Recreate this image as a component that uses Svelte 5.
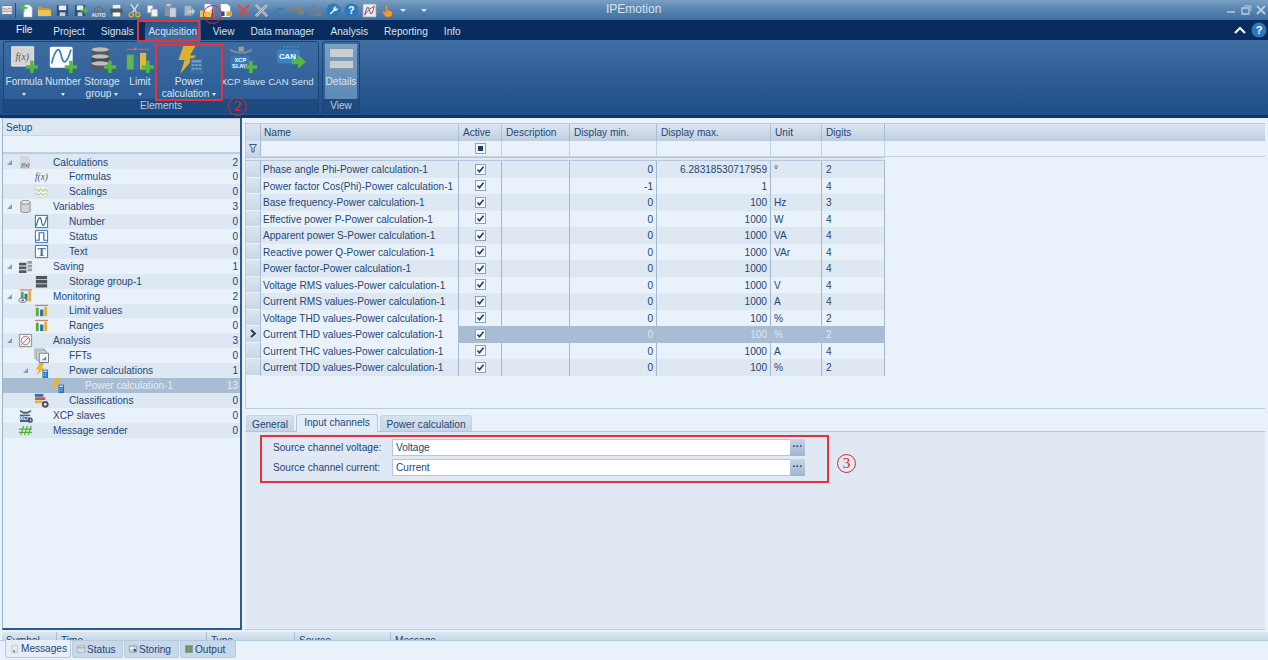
<script>
  const plus = '<path d="M24 18h4v5h5v4h-5v5h-4v-5h-5v-4h5z" fill="#55b93f"/>';
  const dbDisc = (y, c) => `<path d="M5 ${y}c0-3 20-3 20 0v5c0 3-20 3-20 0z" fill="${c}"/><ellipse cx="15" cy="${y}" rx="10" ry="2.4" fill="#b9bcc0"/>`;

  const small = {
    new: '<path d="M5 2h6l3 3v10H5z" fill="#fff" stroke="#9fb2c6" stroke-width=".6"/><path d="M1 4h3V1h2v3h3v2H6v3H4V6H1z" fill="#58b84a"/>',
    open: '<path d="M1 4h5l1 1.5h7V9H1z" fill="#c99c36"/><path d="M1 14V7.5h14V14z" fill="#eec353"/>',
    save: '<path d="M2 2h12v12H2z" fill="#2f4f78"/><path d="M4 2.6h8v5H4z" fill="#e9eff6"/><path d="M5 10h6v4H5z" fill="#c6d1de"/>',
    saveas: '<path d="M2 2h11v12H2z" fill="#2f4f78"/><path d="M4 2.6h7v5H4z" fill="#e9eff6"/><path d="M5 10h5v4H5z" fill="#c6d1de"/><path d="M8 7h4V4l4 4-4 4V9H8z" fill="#58b84a"/>',
    auto: '<path d="M3 9a5 5 0 0 1 10 0z" fill="#7c7f82" stroke="#5f6266" stroke-dasharray="2 1"/><text x="8" y="15" font-size="5.4" font-weight="700" text-anchor="middle" fill="#e6ecf2" font-family="Liberation Sans">AUTO</text>',
    print: '<path d="M4 2h8v4H4z" fill="#eef1f4"/><path d="M1.500 6h13v6h-13z" fill="#55585c"/><path d="M4 10h8v4.500H4z" fill="#fff" stroke="#888" stroke-width=".5"/>',
    cut: '<path d="M4 1l6 9M12 1L6 10" stroke="#d5d9de" stroke-width="1.600" fill="none"/><circle cx="4.500" cy="12.500" r="2.200" fill="none" stroke="#d8ae30" stroke-width="1.500"/><circle cx="11.500" cy="12.500" r="2.200" fill="none" stroke="#d8ae30" stroke-width="1.500"/>',
    copy: '<path d="M2 2h7v9H2z" fill="#8f9aa6"/><path d="M3 3h5v7H3z" fill="#fff"/><path d="M6 6h8v9H6z" fill="#8f9aa6"/><path d="M7 7h6v7H7z" fill="#eef1f4"/>',
    paste: '<path d="M2 2h8v12H2z" fill="#8b929b"/><path d="M7 5h7v10H7z" fill="#c9d2dc" stroke="#7f8993" stroke-width=".6"/><path d="M4 1h4v2H4z" fill="#cfd4d9"/>',
    move: '<path d="M3 2h9v12H3z" fill="#7f8c9a"/><path d="M4 3h7v10H4z" fill="#a7b4c2"/><path d="M7 8h5V5l3 4-3 4v-3H7z" fill="#c3ced9"/>',
    folderdoc: '<path d="M6 1h6l2 2v8H6z" fill="#fff"/><path d="M1 8h5l1 1h6v6H1z" fill="#eec353"/>',
    docstar: '<path d="M3 1h7l3 3v11H3z" fill="#fff"/><path d="M9 9h6v5H9z" fill="#d9a93a"/><path d="M3 9h4v5H3z" fill="#2f4f78"/>',
    cross: '<path d="M2 2l12 12M14 2L2 14" stroke="#d64a47" stroke-width="2.200"/>',
    crossgrey: '<path d="M2 2l12 12M14 2L2 14" stroke="#c0c8d0" stroke-width="3"/><path d="M2 2l12 12M14 2L2 14" stroke="#7f8a96" stroke-width=".8"/>',
    undo: '<path d="M3 9a6 6 0 0 1 11-1l-2.500 1A3.500 3.500 0 0 0 6 9.500L8 12H1V5z" fill="#3f7db4"/>',
    redo: '<path d="M13 9A6 6 0 0 0 2 8l2.500 1A3.500 3.500 0 0 1 10 9.500L8 12h7V5z" fill="#8b8063"/>',
    gears: '<circle cx="7" cy="8" r="4.500" fill="none" stroke="#777f87" stroke-width="3" stroke-dasharray="2 1"/><circle cx="12" cy="12" r="2.500" fill="#777f87"/>',
    wrench: '<circle cx="8" cy="8" r="7.500" fill="#2b78bb"/><path d="M11.500 3.500a3 3 0 0 0-3.600 3.800L4 11.200 5 12.300l3.900-3.900a3 3 0 0 0 3.800-3.600L11 6.500 9.600 5.200z" fill="#eaf2f9"/>',
    help: '<circle cx="8" cy="8" r="7.500" fill="#2b78bb"/><text x="8" y="12" font-size="11" font-weight="700" text-anchor="middle" fill="#fff" font-family="Liberation Sans">?</text>',
    graph: '<path d="M1 1h14v14H1z" fill="#e8edf2" stroke="#8b98a6" stroke-width=".7"/><path d="M3 13C5 3 7 3 8 8s3 5 5-5" fill="none" stroke="#c9534f" stroke-width="1.200"/><path d="M3 13c3-5 6-8 10-9" fill="none" stroke="#3a7ab5" stroke-width="1"/>',
    hand: '<path d="M6 1.500h2v6l5 1.500v4l-2 2H6L2.500 9.500 4 8.500l2 1.500z" fill="#ee9a3c" stroke="#b86c1f" stroke-width=".5"/>',
    calc: '<path d="M2 1h8l3 3v11H2z" fill="#d5d8dc"/><text x="8" y="13" font-size="6" font-style="italic" font-weight="700" text-anchor="middle" fill="#55585c" font-family="Liberation Serif">f(x)</text>',
    fx: '<text x="8" y="12" font-size="10" font-style="italic" text-anchor="middle" fill="#55585c" font-family="Liberation Serif">f(x)</text>',
    scaling: '<path d="M1.500 2h13v12h-13z" fill="#eef3ee" stroke="#c5ccc5" stroke-width=".5"/><path d="M2 5l3 3 2-3 3 3 2-3 2 3M2 10l3 2 2-2 3 2 2-2 2 2" fill="none" stroke="#69b35d" stroke-width=".8"/>',
    cyl: '<path d="M3 3.500v9.500c0 2 10 2 10 0V3.500z" fill="#d1d4d7" stroke="#6f7478" stroke-width=".8"/><ellipse cx="8" cy="3.500" rx="5" ry="2" fill="#e9ebed" stroke="#6f7478" stroke-width=".8"/>',
    number: '<path d="M1.500 1.500h13v13h-13z" fill="#fff" stroke="#2f6ea8"/><path d="M2.500 13C5 2 7 2 8 8s3 6 5.500-5" fill="none" stroke="#2f6ea8" stroke-width="1.300"/>',
    status: '<path d="M1.500 1.500h13v13h-13z" fill="#fff" stroke="#2f6ea8"/><path d="M2 12h3.500V4h5v8H14" fill="none" stroke="#2f6ea8" stroke-width="1.300"/>',
    textbox: '<path d="M1.500 1.500h13v13h-13z" fill="#fff" stroke="#2f6ea8"/><text x="8" y="13" font-size="13" font-weight="700" text-anchor="middle" fill="#2f6ea8" font-family="Liberation Serif">T</text>',
    saving: '<path d="M1 4h8v3H1zM1 8h8v3H1zM1 12h8v3H1z" fill="#54585c"/><path d="M10 2h5v3h-5zM10 6h5v3h-5zM10 10h5v3h-5z" fill="#9a9ea2"/>',
    stack: '<path d="M2 2h12v3.500H2zM2 6.500h12V10H2zM2 11h12v3.500H2z" fill="#50555a"/>',
    monitor: '<path d="M2 1h13" stroke="#cf5a55"/><path d="M3 3h3v10H3z" fill="#57a948"/><path d="M7 5h3v8H7z" fill="#2f6ea8"/><path d="M11 2h3v11h-3z" fill="#dfb032"/><ellipse cx="5" cy="12" rx="4" ry="2.500" fill="#e9f2fb" stroke="#44505c" stroke-width=".7"/><circle cx="5" cy="12" r="1.200" fill="#44505c"/>',
    bars: '<path d="M1 2.500h14" stroke="#cf5a55"/><path d="M2 5h3v9H2z" fill="#57a948"/><path d="M6.500 7H10v7H6.500z" fill="#2f6ea8"/><path d="M11 4h3v10h-3z" fill="#dfb032"/>',
    analysis: '<path d="M1.500 1.500h13v13h-13z" fill="#eef1f4" stroke="#858c93"/><circle cx="8" cy="8" r="4.500" fill="none" stroke="#c2706b" stroke-width="1"/><path d="M3 13l5-5 4-4" stroke="#69a35d" stroke-width="1"/>',
    ffts: '<path d="M1 1h10v10H1z" fill="#e2e6ea" stroke="#83898f" stroke-width=".8"/><path d="M3 3h10v10H3z" fill="#e2e6ea" stroke="#83898f" stroke-width=".8"/><path d="M5.500 5.500h10v10h-10z" fill="#f2f4f6" stroke="#6a7076"/><path d="M8 13h5v-4z" fill="#5a88b5"/>',
    bolt: '<path d="M6 0h5L8 5h3L3 13l2-6H2z" fill="#e7b62f"/><path d="M9 7h6v9H9z" fill="#2e78b5"/><path d="M10 8h4v1.500h-4z" fill="#cfe2f1"/><path d="M10 11h1v1h-1zM12 11h1v1h-1zM10 13h1v1h-1zM12 13h1v1h-1z" fill="#cfe2f1"/>',
    classes: '<path d="M1 1h9v3H1z" fill="#2f6ea8"/><path d="M1 4.500h11v3H1z" fill="#d8524d"/><path d="M1 8h8v3H1z" fill="#e3b437"/><circle cx="12" cy="12" r="2.600" fill="none" stroke="#4b4f54" stroke-width="2"/>',
    xcp: '<path d="M2 2l4 2h4l4-2v2l-4 2H6L2 4z" fill="#55626f"/><path d="M2 7h11v8H2z" fill="#2f6ea8"/><text x="7.500" y="13" font-size="5.500" font-weight="700" text-anchor="middle" fill="#fff" font-family="Liberation Sans">XCP</text><circle cx="13" cy="13" r="2" fill="none" stroke="#4b4f54" stroke-width="1.500"/>',
    msg: '<path d="M3 13L6 3M7 13l3-10M11 13l3-10M1 6.500h14M1 10h14" stroke="#53b041" stroke-width="1.300"/>',
    mMessages: '<path d="M3 2h9v12H3z" fill="#e8ebee" stroke="#9aa4ae" stroke-width=".7"/><path d="M5 10h3v3H5z" fill="#57a948"/>',
    mStatus: '<path d="M2 3h12v10H2z" fill="#e8ebee" stroke="#8e98a2"/><path d="M3 5h5v1H3z" fill="#cf5a55"/><path d="M9 5h4v1H9z" fill="#57a948"/><path d="M3 8h10" stroke="#8e98a2"/>',
    mStoring: '<path d="M2 3h12v10H2z" fill="#cdd4db" stroke="#7f8993"/><path d="M3 5h5v3H3z" fill="#eef1f4"/><path d="M9 8h4v4H9z" fill="#50555a"/>',
    mOutput: '<path d="M2 2h12v12H2z" fill="#7c868f"/><path d="M8 3l4 5h-2v4H6V8H4z" fill="#57b048"/>',
  };

  const large = {
    formula: `<path d="M3 2h25v22H3z" fill="#d4d4d2" stroke="#f2f2f0"/><text x="15" y="17" font-size="11" font-style="italic" text-anchor="middle" fill="#55585c" font-family="Liberation Serif">f(x)</text>${plus}`,
    number: `<rect x="2" y="2" width="26" height="24" rx="2" fill="#fff"/><path d="M4 21C9 2 13 2 15 12s6 11 11-7" fill="none" stroke="#3a80bd" stroke-width="2"/>${plus}`,
    storage: dbDisc(5, '#54585c') + dbDisc(13, '#48494d') + dbDisc(21, '#55585c') + plus,
    limit: `<path d="M1 5h26" stroke="#d9534f" stroke-width="1.500"/><path d="M2 11h8v17H2z" fill="#66b34f"/><path d="M10 3h3v3h-3z" fill="#7f8a96"/><path d="M10 14h6v14h-6z" fill="#2f73ae"/><path d="M17 9h7v19h-7z" fill="#e2b733"/>${plus}`,
    power: '<path d="M11 0h14l-7 12h7L7 33l5-16H5z" fill="#dfb02e"/><path d="M18 15h15v18H18z" fill="#3c6f9f"/><path d="M20 17h11v3H20z" fill="#6f9cc5"/><path d="M20 22h3v2h-3zM24 22h3v2h-3zM28 22h3v2h-3zM20 26h3v2h-3zM24 26h3v2h-3zM28 26h3v2h-3z" fill="#7ba6cb"/>',
    xcp: `<path d="M2 4l8 3h10l7-3v3l-7 3H10L2 7z" fill="#7b8794"/><path d="M12 2h6v5h-6z" fill="#94a0ac"/><rect x="3" y="12" width="22" height="15" rx="2" fill="#3578b5"/><text x="14" y="19" font-size="6.500" font-weight="700" text-anchor="middle" fill="#fff" font-family="Liberation Sans">XCP</text><text x="13" y="26" font-size="6.500" font-weight="700" text-anchor="middle" fill="#fff" font-family="Liberation Sans">SLAV</text>${plus}`,
    can: '<path d="M8 1h2v2H8zM12 1h2v2h-2zM16 1h2v2h-2zM20 1h2v2h-2zM24 1h2v2h-2z" fill="#4a86bd"/><rect x="1" y="5" width="26" height="16" rx="3" fill="#3b82c0"/><text x="13" y="16" font-size="9" font-weight="700" text-anchor="middle" fill="#fff" font-family="Liberation Sans">CAN</text><path d="M18 16h7v-5l9 8-9 8v-5h-7z" fill="#55b93f"/>',
  };

  const qat = ['new', 'open', 'save', 'saveas', 'auto', 'print', 'cut', 'copy', 'paste', 'move', 'folderdoc', 'docstar', 'cross', 'crossgrey', 'undo', 'redo', 'gears', 'wrench', 'help', 'graph', 'hand'];
  const menu = ['Project', 'Signals', 'Acquisition', 'View', 'Data manager', 'Analysis', 'Reporting', 'Info'];

  const elements = [
    { id: 'formula', cls: 'w-formula', lines: ['Formula'], arrow: 'below' },
    { id: 'number', cls: 'w-number', lines: ['Number'], arrow: 'below' },
    { id: 'storage', cls: 'w-storage', lines: ['Storage', 'group'], arrow: 'inline' },
    { id: 'limit', cls: 'w-limit', lines: ['Limit'], arrow: 'below' },
    { id: 'power', cls: 'w-power', lines: ['Power', 'calculation'], arrow: 'inline' },
    { id: 'xcp', cls: 'w-xcp', lines: ['XCP slave'], arrow: '' },
    { id: 'can', cls: 'w-can', lines: ['CAN Send'], arrow: '' },
  ];

  const tree = [
    { l: 0, open: 1, icon: 'calc', name: 'Calculations', n: 2 },
    { l: 1, icon: 'fx', name: 'Formulas', n: 0 },
    { l: 1, icon: 'scaling', name: 'Scalings', n: 0 },
    { l: 0, open: 1, icon: 'cyl', name: 'Variables', n: 3 },
    { l: 1, icon: 'number', name: 'Number', n: 0 },
    { l: 1, icon: 'status', name: 'Status', n: 0 },
    { l: 1, icon: 'textbox', name: 'Text', n: 0 },
    { l: 0, open: 1, icon: 'saving', name: 'Saving', n: 1 },
    { l: 1, icon: 'stack', name: 'Storage group-1', n: 0 },
    { l: 0, open: 1, icon: 'monitor', name: 'Monitoring', n: 2 },
    { l: 1, icon: 'bars', name: 'Limit values', n: 0 },
    { l: 1, icon: 'bars', name: 'Ranges', n: 0 },
    { l: 0, open: 1, icon: 'analysis', name: 'Analysis', n: 3 },
    { l: 1, icon: 'ffts', name: 'FFTs', n: 0 },
    { l: 1, open: 1, icon: 'bolt', name: 'Power calculations', n: 1 },
    { l: 2, icon: 'bolt', name: 'Power calculation-1', n: 13, sel: 1 },
    { l: 1, icon: 'classes', name: 'Classifications', n: 0 },
    { l: 0, icon: 'xcp', name: 'XCP slaves', n: 0 },
    { l: 0, icon: 'msg', name: 'Message sender', n: 0 },
  ];

  const columns = ['Name', 'Active', 'Description', 'Display min.', 'Display max.', 'Unit', 'Digits'];
  const channels = [
    ['Phase angle Phi', 0, '6.28318530717959', '°', 2],
    ['Power factor Cos(Phi)', -1, 1, '', 4],
    ['Base frequency', 0, 100, 'Hz', 3],
    ['Effective power P', 0, 1000, 'W', 4],
    ['Apparent power S', 0, 1000, 'VA', 4],
    ['Reactive power Q', 0, 1000, 'VAr', 4],
    ['Power factor', 0, 1000, '', 4],
    ['Voltage RMS values', 0, 1000, 'V', 4],
    ['Current RMS values', 0, 1000, 'A', 4],
    ['Voltage THD values', 0, 100, '%', 2],
    ['Current THD values', 0, 100, '%', 2],
    ['Current THC values', 0, 1000, 'A', 4],
    ['Current TDD values', 0, 100, '%', 2],
  ];
  const selectedRow = 10;

  const logTabs = [
    { name: 'Messages', icon: 'mMessages', cls: 'log-messages' },
    { name: 'Status', icon: 'mStatus', cls: 'log-status' },
    { name: 'Storing', icon: 'mStoring', cls: 'log-storing' },
    { name: 'Output', icon: 'mOutput', cls: 'log-output' },
  ];
</script>

<div class="window">
  <header class="titlebar">
    <svg class="appicon" viewBox="0 0 16 16"><path d="M1 2h14v12H1z" fill="#dfe6ee" stroke="#5a6e85" /><path d="M2 7c3-3 5 2 7 0s3-1 5 0M2 10c3-2 5 1 7 0s3-1 5 0" fill="none" stroke="#c9534f" /></svg>
    <span class="qat-sep"></span>
    {#each qat as name}
      <span class="qat-btn"><svg class="ico" viewBox="0 0 16 16">{@html small[name]}</svg></span>
    {/each}
    <span class="qat-drop"></span>
    <span class="qat-custom"></span>
    <span class="title">IPEmotion</span>
    <span class="winbtns">
      <svg viewBox="0 0 12 10"><path d="M2 7h8" stroke="#b8cde2" stroke-width="1.500" /></svg>
      <svg viewBox="0 0 12 10"><path d="M2 3h7v6H2z" fill="none" stroke="#b8cde2" stroke-width="1.300" /><path d="M4 1h7v5" fill="none" stroke="#b8cde2" /></svg>
      <svg viewBox="0 0 12 10"><path d="M2 1l8 8M10 1L2 9" stroke="#b8cde2" stroke-width="1.800" /></svg>
    </span>
  </header>

  <nav class="menubar">
    <span class="file-tab">File</span>
    {#each menu as item}
      <span class="menu-tab" class:active={item === 'Acquisition'}>{item}</span>
    {/each}
    <span class="menu-right">
      <svg class="collapse" viewBox="0 0 12 8"><path d="M1 7l5-5 5 5" fill="none" stroke="#f2f5f8" stroke-width="2.200" /></svg>
      <svg class="ico help" viewBox="0 0 16 16">{@html small.help}</svg>
    </span>
  </nav>

  <section class="ribbon">
    <div class="group group-elements">
      <div class="group-body">
        {#each elements as el}
          <div class="rb-btn {el.cls}">
            <svg class="rb-icon" viewBox="0 0 34 33">{@html large[el.id]}</svg>
            {#each el.lines as line, i}
              <span class="rb-label">{line}{#if el.arrow === 'inline' && i === el.lines.length - 1}<i class="caret inline"></i>{/if}</span>
            {/each}
            {#if el.arrow === 'below'}<i class="caret below"></i>{/if}
          </div>
        {/each}
      </div>
      <div class="group-label">Elements</div>
    </div>
    <div class="group group-view">
      <div class="group-body">
        <div class="rb-btn details">
          <span class="details-icon"><i></i><i></i></span>
          <span class="rb-label">Details</span>
        </div>
      </div>
      <div class="group-label">View</div>
    </div>
  </section>

  <main class="content">
    <aside class="setup">
      <div class="setup-head">Setup</div>
      <div class="setup-filter"></div>
      <div class="tree">
        {#each tree as node}
          <div class="node l{node.l}" class:sel={node.sel}>
            <span class="expander">{#if node.open}<i></i>{/if}</span>
            <svg class="ico" viewBox="0 0 16 16">{@html small[node.icon]}</svg>
            <span class="node-name">{node.name}</span>
            <span class="node-count">{node.n}</span>
          </div>
        {/each}
      </div>
    </aside>

    <div class="workspace">
      <div class="grid-pane">
        <div class="grow head">
          <span class="rowhead"></span>
          {#each columns as col}
            <span class="cell">{col}</span>
          {/each}
          <span class="cell rest"></span>
        </div>
        <div class="grow filter">
          <span class="rowhead">
            <svg viewBox="0 0 8 9"><path d="M.5.500h7L5 4v4H3V4z" fill="#dfe8f3" stroke="#2f5a8c" /></svg>
          </span>
          <span class="cell"></span>
          <span class="cell center"><i class="check mixed"></i></span>
          <span class="cell"></span>
          <span class="cell"></span>
          <span class="cell"></span>
          <span class="cell"></span>
          <span class="cell"></span>
        </div>
        <div class="filter-gap"></div>
        {#each channels as ch, i}
          <div class="grow data" class:alt={i % 2 === 0} class:selected={i === selectedRow}>
            <span class="rowhead">{#if i === selectedRow}<svg viewBox="0 0 8 9"><path d="M2 1l4 3.500L2 8" fill="none" stroke="#14335e" stroke-width="1.800" /></svg>{/if}</span>
            <span class="cell name">{ch[0]}-Power calculation-1</span>
            <span class="cell center"><i class="check"><svg viewBox="0 0 11 11"><path d="M2.500 5.500l2 2.200 4-5" fill="none" stroke="#1c3d6c" stroke-width="1.600" /></svg></i></span>
            <span class="cell"></span>
            <span class="cell num">{ch[1]}</span>
            <span class="cell num">{ch[2]}</span>
            <span class="cell unit">{ch[3]}</span>
            <span class="cell unit">{ch[4]}</span>
          </div>
        {/each}
      </div>

      <div class="tabs">
        <span class="tab">General</span>
        <span class="tab active">Input channels</span>
        <span class="tab">Power calculation</span>
      </div>
      <div class="tab-panel">
        <div class="field">
          <span class="field-label">Source channel voltage:</span>
          <span class="field-input">Voltage</span>
          <span class="field-btn">···</span>
        </div>
        <div class="field">
          <span class="field-label">Source channel current:</span>
          <span class="field-input">Current</span>
          <span class="field-btn">···</span>
        </div>
      </div>
    </div>
  </main>

  <div class="log-head">
    <span class="log-col c-symbol">Symbol</span>
    <span class="log-col c-time">Time</span>
    <span class="log-col c-type">Type</span>
    <span class="log-col c-source">Source</span>
    <span class="log-col c-message">Message</span>
  </div>
  <div class="log-tabs">
    {#each logTabs as t, i}
      <span class="log-tab {t.cls}" class:active={i === 0}>
        <svg class="ico" viewBox="0 0 16 16">{@html small[t.icon]}</svg>{t.name}
      </span>
    {/each}
  </div>

  <!-- red annotation marks drawn over the screenshot -->
  <i class="mark box-1"></i>
  <i class="mark box-2"></i>
  <i class="mark box-3"></i>
  <span class="num-mark n1">1</span>
  <span class="num-mark n2">2</span>
  <span class="num-mark n3">3</span>
</div>

<style>
  :global(body) {
    margin: 0;
    background: #e9f2fb;
  }
  .window {
    position: relative;
    width: 1268px;
    height: 660px;
    overflow: hidden;
    display: flex;
    flex-direction: column;
    font-family: "Liberation Sans", Arial, sans-serif;
    font-size: 10.1px;
    color: #1f4677;
    background: #e9f2fb;
  }
  .ico {
    display: block;
    width: 16px;
    height: 16px;
    flex: none;
  }

  /* title bar */
  .titlebar {
    position: relative;
    height: 20px;
    flex: none;
    display: flex;
    align-items: center;
    background: linear-gradient(#7a9fc4, #5a86b2 45%, #3f6f9f);
  }
  .appicon {
    width: 12px;
    height: 12px;
    margin-left: 1px;
  }
  .qat-sep {
    width: 1px;
    height: 15px;
    margin: 0 1px 0 2px;
    background: #234c7c;
  }
  .qat-btn {
    width: 18.1px;
    display: flex;
    justify-content: center;
  }
  .qat-btn .ico {
    width: 15px;
    height: 15px;
  }
  .qat-drop,
  .qat-custom {
    width: 0;
    height: 0;
    border: 3px solid transparent;
    border-top: 3px solid #dbe6f0;
    margin: 3px 0 0 3px;
  }
  .qat-custom {
    margin-left: 15px;
  }
  .title {
    position: absolute;
    left: 606px;
    top: 2px;
    font-size: 12px;
    line-height: 15px;
    color: #d4e2f0;
  }
  .winbtns {
    margin-left: auto;
    margin-right: 1px;
    display: flex;
    gap: 3px;
  }
  .winbtns svg {
    width: 12px;
    height: 10px;
  }

  /* menu tabs */
  .menubar {
    height: 20px;
    flex: none;
    display: flex;
    align-items: stretch;
    padding-left: 8px;
    background: #072c5d;
    color: #d7e3ef;
    line-height: 23px;
  }
  .file-tab {
    padding: 0 8px;
    margin-right: 5px;
    color: #f2f6fa;
    line-height: 20px;
  }
  .menu-tab {
    padding: 0 8px;
  }
  .menu-tab.active {
    background: linear-gradient(#254f85, #3f6fa3);
    padding: 0;
    margin: 0 4px 0 3px;
    width: 56px;
    text-align: center;
  }
  .menu-right {
    margin-left: auto;
    display: flex;
    align-items: center;
    gap: 5px;
    padding-right: 1px;
  }
  .collapse {
    width: 12px;
    height: 8px;
  }

  /* ribbon */
  .ribbon {
    height: 78px;
    flex: none;
    box-sizing: border-box;
    padding: 1px 0 2px 3px;
    display: flex;
    gap: 3px;
    background: linear-gradient(#3f6fa3, #2b5a92 60%, #1f4f88);
    border-bottom: 3px solid #0d3566;
    color: #d7e3ef;
  }
  .group {
    display: flex;
    flex-direction: column;
    box-sizing: border-box;
    border: 1px solid #1b4478;
    border-radius: 3px;
    background: linear-gradient(#3c6ca1, #2a5a94);
  }
  .group-elements {
    width: 316px;
  }
  .group-view {
    width: 38px;
  }
  .group-body {
    flex: 1;
    display: flex;
    min-height: 0;
  }
  .group-label {
    height: 13px;
    line-height: 13px;
    text-align: center;
    background: #1f4a80;
    color: #b9cde2;
  }
  .rb-btn {
    display: flex;
    flex-direction: column;
    align-items: center;
    box-sizing: border-box;
    padding-top: 3px;
    line-height: 12px;
    white-space: nowrap;
  }
  .rb-icon {
    width: 30px;
    height: 29px;
    margin-bottom: 2px;
    flex: none;
  }
  .w-formula { width: 40px; }
  .w-number { width: 38px; }
  .w-storage { width: 40px; }
  .w-limit { width: 36px; }
  .w-power { width: 62px; }
  .w-xcp { width: 46px; font-size: 9.6px; }
  .w-can { width: 50px; font-size: 9.6px; }
  .caret {
    display: inline-block;
    width: 0;
    height: 0;
    border: 2.500px solid transparent;
    border-top: 3px solid #e3ecf5;
  }
  .caret.inline {
    margin: 0 0 -1px 3px;
  }
  .caret.below {
    margin-top: 5px;
  }
  .details {
    width: 32px;
    height: 55px;
    margin: 2px auto 0;
    background: linear-gradient(#7aa0c5, #5f8ab5);
  }
  .details-icon {
    width: 25px;
    height: 21px;
    margin: 1px 0 7px;
    display: flex;
    flex-direction: column;
    gap: 2px;
    box-sizing: border-box;
  }
  .details-icon i {
    flex: 1;
    background: #c9ced4;
    border: 1px solid #8398ad;
  }

  /* layout below ribbon */
  .content {
    flex: 1;
    min-height: 0;
    display: flex;
    gap: 3px;
    padding-left: 2px;
  }
  .setup {
    width: 240px;
    flex: none;
    box-sizing: border-box;
    border-right: 2px solid #2d5b8d;
    border-bottom: 2px solid #2d5b8d;
    border-left: 1px solid #9db4cd;
    display: flex;
    flex-direction: column;
  }
  .setup-head {
    height: 16px;
    line-height: 17px;
    padding-left: 3px;
    flex: none;
    background: #dde7f2;
    border-top: 1px solid #b8cade;
  }
  .setup-filter {
    height: 16px;
    flex: none;
    border-top: 1px solid #c9d8e8;
    border-bottom: 2px solid #bccde0;
    box-shadow: 0 1px 0 #dbe6f1;
  }
  .tree {
    padding-top: 0.6px;
  }
  .node {
    height: 14.9px;
    display: flex;
    align-items: center;
    line-height: 15px;
    white-space: nowrap;
    background: #e9f2fb;
  }
  .node:nth-child(odd) {
    background: #dee8f2;
  }
  .node.sel {
    background: #a8bdd3;
    color: #e4ecf4;
  }
  .l0 { padding-left: 2px; }
  .l1 { padding-left: 18px; }
  .l2 { padding-left: 34px; }
  .expander {
    width: 13px;
    flex: none;
    display: flex;
    align-items: center;
  }
  .expander i {
    margin-left: 2px;
    width: 0;
    height: 0;
    border-left: 5px solid transparent;
    border-bottom: 5px solid #8a9bb0;
  }
  .node .ico {
    width: 15px;
    height: 15px;
    margin-right: 20px;
  }
  .node-count {
    margin-left: auto;
    padding-right: 2px;
  }

  .workspace {
    flex: 1;
    min-width: 0;
    display: flex;
    flex-direction: column;
    padding-right: 3px;
  }

  /* channel grid */
  .grid-pane {
    height: 287px;
    margin-top: 4px;
    flex: none;
    box-sizing: border-box;
    border: 1px solid #bccbdd;
    border-top: 0;
    border-right: 0;
  }
  .grow {
    display: grid;
    grid-template-columns: 15px 198px 43px 68px 87px 114px 51px 63px;
  }
  .grow.head {
    grid-template-columns: 15px 198px 43px 68px 87px 114px 51px 63px 1fr;
    height: 17px;
    line-height: 17px;
    margin-top: 1px;
    background: linear-gradient(#dde7f2, #bdcddf);
    border-top: 1px solid #b8cade;
  }
  .head .cell {
    padding-left: 4px;
    border-right: 1px solid #a9bed6;
  }
  .head .rowhead + .cell {
    padding-left: 3px;
  }
  .head .rest {
    border-right: 0;
  }
  .cell {
    box-sizing: border-box;
    min-width: 0;
    border-right: 1px solid #a3b9d2;
    white-space: nowrap;
    overflow: hidden;
  }
  .rowhead {
    box-sizing: border-box;
    background: linear-gradient(#dbe5f0, #c9d7e6);
    border-right: 1px solid #a3b9d2;
    display: flex;
    align-items: center;
    justify-content: center;
  }
  .rowhead svg {
    width: 8px;
    height: 9px;
  }
  .grow.filter {
    height: 16px;
    box-sizing: border-box;
    border-bottom: 1px solid #c3d3e4;
  }
  .grow.filter .cell {
    border-right-color: #c3d3e4;
  }
  .filter-gap {
    height: 4px;
    box-sizing: border-box;
    width: 639px;
    border-top: 1px solid #b6c8dc;
    border-bottom: 1px solid #b6c8dc;
    background: #dfe8f3;
  }
  .grow.data {
    height: 16.5px;
    line-height: 17.5px;
  }
  .data.alt .cell {
    background: #dee8f2;
  }
  .data .rowhead {
    border-bottom: 1px solid #e9f2fb;
  }
  .data .name {
    padding-left: 2px;
  }
  .center {
    display: flex;
    align-items: center;
    justify-content: center;
  }
  .num {
    text-align: right;
    padding-right: 3px;
  }
  .unit {
    padding-left: 3px;
  }
  .unit:last-child {
    padding-left: 4px;
  }
  .data.selected .cell:not(.name) {
    background: #a8bdd3;
    color: #dde7f1;
    border-right-color: #a8bdd3;
  }
  .data.selected .name {
    background: #e9f2fb;
  }
  .check {
    width: 11px;
    height: 11px;
    box-sizing: border-box;
    background: #f6f9fc;
    border: 1px solid #8ba2bd;
    display: flex;
    align-items: center;
    justify-content: center;
  }
  .check svg {
    width: 11px;
    height: 11px;
    flex: none;
  }
  .check.mixed::after {
    content: "";
    width: 5px;
    height: 5px;
    background: #1c3d6c;
  }

  /* detail tabs */
  .tabs {
    height: 17px;
    margin-top: 5px;
    flex: none;
    display: flex;
    align-items: flex-end;
    padding-left: 1px;
    gap: 2px;
  }
  .tab {
    box-sizing: border-box;
    height: 16px;
    line-height: 17px;
    text-align: center;
    border: 1px solid #c2d3e5;
    border-bottom: 0;
    border-radius: 3px 3px 0 0;
    background: linear-gradient(#d6e2ee, #c3d5e7);
  }
  .tab:nth-child(1) { width: 48px; }
  .tab:nth-child(2) {
    width: 82px;
    height: 18px;
    line-height: 16px;
    margin-bottom: -1px;
    position: relative;
    background: #e3edf7;
    border-color: #b6c8dc;
  }
  .tab:nth-child(3) { width: 92px; }
  .tab-panel {
    flex: 1;
    min-height: 0;
    box-sizing: border-box;
    padding: 7px 0 0 28px;
    background: #dfe8f3;
    border-top: 1px solid #b3c5da;
    border-bottom: 1px solid #c2d0e0;
    display: flex;
    flex-direction: column;
    gap: 3px;
  }
  .field {
    display: flex;
    align-items: stretch;
    height: 17px;
    line-height: 17px;
  }
  .field-label {
    width: 119px;
  }
  .field-input {
    width: 398px;
    box-sizing: border-box;
    padding-left: 3px;
    background: #fff;
    border: 1px solid #b5c7de;
    border-right: 0;
    line-height: 15px;
  }
  .field-btn {
    width: 15px;
    text-align: center;
    font-weight: 700;
    line-height: 15px;
    color: #17406f;
    background: linear-gradient(#c6d5e5, #9fb6d0);
  }

  /* log strip */
  .log-head {
    height: 8px;
    flex: none;
    margin: 2px 0 0 2px;
    display: flex;
    overflow: hidden;
    background: linear-gradient(#dde7f2, #c8d7e6);
    line-height: 18px;
  }
  .log-col {
    box-sizing: border-box;
    padding-left: 4px;
    border-right: 1px solid #a9bed6;
  }
  .c-symbol { width: 55px; }
  .c-time { width: 150px; }
  .c-type { width: 88px; }
  .c-source { width: 96px; }
  .c-message { flex: 1; border-right: 0; }
  .log-tabs {
    height: 19px;
    flex: none;
    padding-left: 5px;
    display: flex;
    align-items: flex-start;
    gap: 1px;
    border-top: 1px solid #b6c8dc;
    background: #e9f2fb;
  }
  .log-tab {
    box-sizing: border-box;
    height: 17px;
    display: flex;
    align-items: center;
    gap: 1px;
    padding-left: 3px;
    white-space: nowrap;
    background: #c7d8ea;
    border: 1px solid #b6cade;
    border-top: 0;
    border-radius: 0 0 3px 3px;
  }
  .log-tab .ico {
    width: 10px;
    height: 10px;
  }
  .log-tab.active {
    background: #e6eff8;
    height: 18px;
    margin-top: -1px;
    padding-left: 4px;
  }
  .log-messages { width: 66px; }
  .log-status { width: 51px; }
  .log-storing { width: 55px; }
  .log-output { width: 56px; }

  /* annotations */
  .mark {
    position: absolute;
    box-sizing: border-box;
    border: 2px solid #e8323a;
  }
  .box-1 { left: 137px; top: 20px; width: 63px; height: 22px; }
  .box-2 { left: 155px; top: 44px; width: 68px; height: 57px; }
  .box-3 { left: 260px; top: 435px; width: 569px; height: 48px; }
  .num-mark {
    position: absolute;
    box-sizing: border-box;
    width: 19px;
    height: 19px;
    border: 1.500px solid #e8212c;
    border-radius: 50%;
    text-align: center;
    font: 15px/16px "Liberation Serif", serif;
    color: #e8212c;
  }
  .n1 { left: 203px; top: 5px; }
  .n2 { left: 228px; top: 97px; }
  .n3 { left: 837px; top: 454px; }
</style>
